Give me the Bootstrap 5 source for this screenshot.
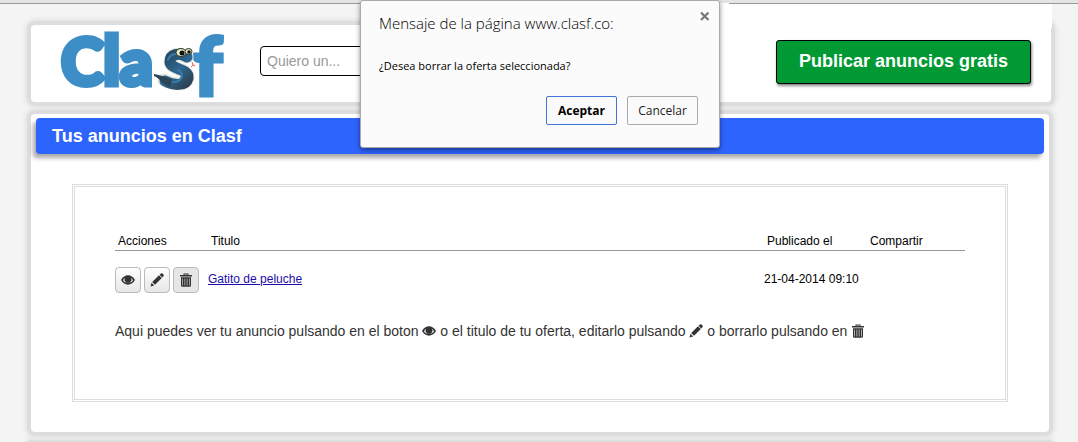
<!DOCTYPE html>
<html lang="es">
<head>
<meta charset="utf-8">
<meta name="viewport" content="width=device-width, initial-scale=1">
<title>Tus anuncios en Clasf</title>
<link href="https://cdn.jsdelivr.net/npm/bootstrap@5.3.0/dist/css/bootstrap.min.css" rel="stylesheet">
<style>
body { background: #f4f4f4; font-family: "Liberation Sans", Arial, sans-serif; font-size: 14px; line-height: 20px; color: #333; overflow: hidden; }
.page-edge { height: 4px; background: #e4e4e4; border-bottom: 1px solid #999; }
.page-wrap { padding: 17px 23px 0 27px; }
.panel { background: #fff; border: 4px solid #ddd; border-radius: 8px; box-shadow: 0 0 4px 2px #e4e4e4; margin-bottom: 4px; }
.panel-main { margin-right: 2px; }
.panel-top { height: 85px; padding: 0 20px 2px 27px; }
.logo-link { margin-right: 36px; }
.logo-link svg { overflow: visible; }
.search-box { width: 122px; height: 30px; border: 1px solid #000; border-radius: 4px; padding: 4px 6px; font-size: 14px; color: #333; margin-bottom: 4px; }
.search-box::placeholder { color: #999; opacity: 1; }
.btn-publish { height: 44px; padding: 0 22px; margin-bottom: 2px; background: #093; color: #fff; border: 1px solid #000; border-radius: 3px; font-size: 18px; font-weight: 700; box-shadow: 1px 2px 3px #888; }
.btn-publish:hover { background: #082; color: #fff; }
.blank-strip { top: 3px; left: 720px; right: 26px; height: 25px; background: #fff; }
.blank-strip::after { content: ""; display: block; margin-left: 9px; height: 1px; background: #999; }
.section-title { margin: 0; padding: 0 16px; font-size: 18px; line-height: 36px; font-weight: 700; color: #fff; background: #2e64fe; border-radius: 4px; box-shadow: -3px 4px 4px #aaa; }
.panel-body { padding: 4px 5px 30px; }
.ads-box { margin: 30px 36px 0; border: 3px double #ddd; padding: 45px 40px 58px; }
.ads-table { width: 100%; table-layout: fixed; font-size: 12px; color: #000; }
.ads-table th { font-weight: 400; padding: 0 3px; line-height: 18px; border-bottom: 1px solid #999; }
.ads-table td { padding: 16px 0 0; line-height: 24px; vertical-align: top; }
.ads-table td a { color: #1a0dab; }
.c-act { width: 93px; } .c-date { width: 103px; } .c-share { width: 98px; }
.btn-tool { width: 26px; height: 26px; padding: 0; border: 1px solid #bbb; border-radius: 4px; background: linear-gradient(#fff, #e6e6e6); color: #333; line-height: 20px; }
.btn-tool.pressed { background: #e6e6e6; }
.ico { width: 14px; height: 14px; fill: currentColor; vertical-align: -2px; }
.hint { margin: 28px 0 0; }
.dialog-layer { top: 0; left: 2px; right: 0; z-index: 5; pointer-events: none; }
.dialog-card { pointer-events: auto; width: 360px; height: 148px; background: #fbfbfb; border: 1px solid #aaa; border-radius: 3px; box-shadow: 0 2px 5px rgba(0,0,0,.45); padding: 12px 21px 22px 18px; color: #000; font-family: "Open Sans", "Noto Sans", sans-serif; }
.dialog-card h2 { font-size: 15px; line-height: 20px; font-weight: 300; margin: 0; }
.dialog-card p { font-size: 11px; line-height: 20px; margin: 23px 0 0; }
.btn-dialog { width: 71px; height: 29px; padding: 0; font-size: 12px; color: #222; background: #fafafa; border: 1px solid #aaa; border-radius: 2px; }
.btn-dialog.accept { border-color: #4272db; font-weight: 700; color: #000; }
.btn-dismiss { top: 9px; right: 8px; width: 12px; height: 12px; padding: 0; border: 0; background: none; line-height: 0; }
</style>
</head>
<body>
<svg class="d-none" aria-hidden="true">
  <symbol id="eye" viewBox="0 0 14 14"><path fill-rule="evenodd" d="M0 7C3.5.8 10.500.8 14 7 10.500 13.200 3.500 13.200 0 7ZM2 7.200C4 10.700 10 10.700 12 7.200 11.500 6 10.700 5 9.700 4.400A3.400 3.400 0 1 1 4.300 4.400C3.300 5 2.500 6 2 7.200Z"/><path d="M7 4.300A2.500 2.500 0 1 0 9.500 6.500L7.800 6.700Z"/></symbol>
  <symbol id="pencil" viewBox="0 0 14 14"><path d="M.5 13.500 1.500 9.800 4.200 12.500ZM2.200 9 9 2.200 11.800 5 5 11.800ZM9.600 1.700 11 .5C11.600 0 12 .1 12.500.6L13.400 1.500C14 2.100 14 2.500 13.500 3L12.300 4.400Z"/></symbol>
  <symbol id="trash" viewBox="0 0 14 14"><path fill-rule="evenodd" d="M4.500 2V.5H9.500V2H13V3.500H1V2ZM5.500 2H8.500V1.400H5.500ZM2 4.300H12V12.600Q12 13.700 11 13.700H3Q2 13.700 2 12.600ZM3.400 5.400V12.500H4V5.400ZM5.600 5.400V12.500H6.200V5.400ZM7.800 5.400V12.500H8.400V5.400ZM10 5.400V12.500H10.600V5.400Z"/></symbol>
</svg>
<div class="page-edge"></div>

<div class="dialog-layer position-absolute d-flex justify-content-center">
  <section class="dialog-card position-relative d-flex flex-column" role="alertdialog" aria-labelledby="dlg-title" aria-describedby="dlg-text">
    <h2 id="dlg-title">Mensaje de la página www.clasf.co:</h2>
    <button type="button" class="btn-dismiss position-absolute" aria-label="Cerrar"><svg width="12" height="12" viewBox="0 0 12 12"><path d="M2 2.500 9.500 10M9.500 2.500 2 10" stroke="#777" stroke-width="2.200"/></svg></button>
    <p id="dlg-text">¿Desea borrar la oferta seleccionada?</p>
    <div class="d-flex justify-content-end mt-auto" style="gap:10px">
      <button type="button" class="btn btn-dialog accept">Aceptar</button>
      <button type="button" class="btn btn-dialog">Cancelar</button>
    </div>
  </section>
</div>
<div class="blank-strip position-absolute"></div>

<div class="page-wrap">
  <header class="panel panel-top d-flex align-items-center">
    <a href="#" class="logo-link d-block" aria-label="Clasf">
      <svg class="d-block" width="166" height="74" viewBox="58 26 166 74">
        <defs><linearGradient id="skin" gradientUnits="userSpaceOnUse" x1="160" y1="50" x2="196" y2="90"><stop offset="0" stop-color="#223c50"/><stop offset=".5" stop-color="#2e6790"/><stop offset="1" stop-color="#2b3036"/></linearGradient></defs>
        <g font-family="Lato" font-weight="900" fill="#3d8dc6" stroke="#3d8dc6" stroke-width="5">
          <text x="61" y="85" font-size="65">C</text>
          <text x="103" y="85" font-size="68">l</text>
          <text x="120" y="85" font-size="64">a</text>
          <text x="193" y="96" font-size="82" stroke-width="3">f</text>
        </g>
        <g fill="none" stroke-linecap="round">
          <path d="M187 57C179 52 170 54 170 62C171 70 189 68 188 78C186 87 172 84 164 80" stroke="#dfe3df" stroke-width="13"/>
          <path d="M187 57C179 52 170 54 170 62C171 70 189 68 188 78C186 87 172 85 165 81" stroke="url(#skin)" stroke-width="11"/>
          <path d="M168 60C169 55 175 53 180 54M178 70C184 73 183 82 173 82" stroke="#397aa7" stroke-width="2"/>
        </g>
        <path d="M154 74C160 75 166 77 172 79L170 87C162 85 160 78 154 76Z" fill="#2b4558"/>
        <path d="M192 62 193 65 191 67M193 65 195 66" fill="none" stroke="#ef654f"/>
        <ellipse cx="181" cy="52.500" rx="5" ry="4" fill="#e7ecc9" stroke="#2b3827"/>
        <ellipse cx="188.500" cy="51.500" rx="3.500" ry="3" fill="#e7ecc9" stroke="#2b3827"/>
        <circle cx="182" cy="53" r="2.500" fill="#111"/><circle cx="189" cy="52" r="1.800" fill="#111"/>
      </svg>
    </a>
    <input type="text" class="search-box" placeholder="Quiero un..." aria-label="Quiero un...">
    <button type="button" class="btn btn-publish ms-auto">Publicar anuncios gratis</button>
  </header>

  <main class="panel panel-main">
    <div class="panel-body">
      <h1 class="section-title">Tus anuncios en Clasf</h1>
      <div class="ads-box">
        <table class="ads-table">
          <thead><tr><th class="c-act">Acciones</th><th>Titulo</th><th class="c-date">Publicado el</th><th class="c-share">Compartir</th></tr></thead>
          <tbody><tr>
            <td><div class="d-flex" style="gap:3px">
              <button type="button" class="btn btn-tool" aria-label="Ver"><svg class="ico"><use href="#eye"/></svg></button>
              <button type="button" class="btn btn-tool" aria-label="Editar"><svg class="ico"><use href="#pencil"/></svg></button>
              <button type="button" class="btn btn-tool pressed" aria-label="Borrar"><svg class="ico"><use href="#trash"/></svg></button>
            </div></td>
            <td><a href="#">Gatito de peluche</a></td>
            <td>21-04-2014 09:10</td>
            <td></td>
          </tr></tbody>
        </table>
        <p class="hint">Aqui puedes ver tu anuncio pulsando en el boton <svg class="ico"><use href="#eye"/></svg> o el titulo de tu oferta, editarlo pulsando <svg class="ico"><use href="#pencil"/></svg> o borrarlo pulsando en <svg class="ico"><use href="#trash"/></svg></p>
      </div>
    </div>
  </main>
  <footer class="panel panel-main"></footer>
</div>
<script src="https://cdn.jsdelivr.net/npm/bootstrap@5.3.0/dist/js/bootstrap.bundle.min.js"></script>
</body>
</html>
